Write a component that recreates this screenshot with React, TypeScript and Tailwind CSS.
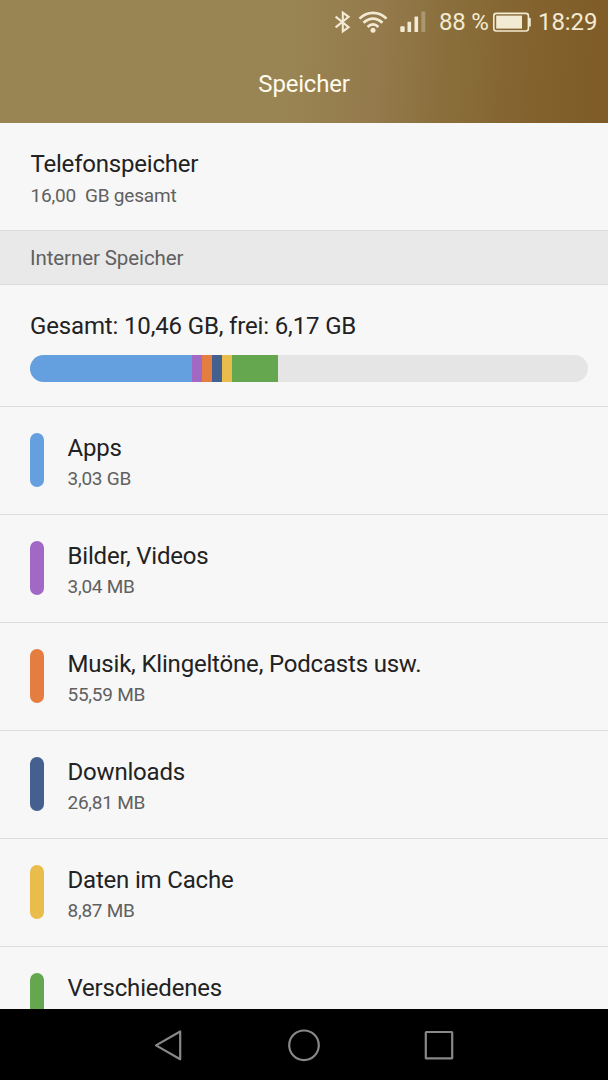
type Category = { name: string; size?: string; color: string };

const categories: Category[] = [
  { name: 'Apps', size: '3,03 GB', color: 'bg-[#64a0e0]' },
  { name: 'Bilder, Videos', size: '3,04 MB', color: 'bg-[#a168c4]' },
  { name: 'Musik, Klingeltöne, Podcasts usw.', size: '55,59 MB', color: 'bg-[#e57d40]' },
  { name: 'Downloads', size: '26,81 MB', color: 'bg-[#44608f]' },
  { name: 'Daten im Cache', size: '8,87 MB', color: 'bg-[#e9bc4b]' },
  { name: 'Verschiedenes', color: 'bg-[#65a74f]' },
];

const segments = [
  'w-[162px] bg-[#64a0e0]',
  'w-[10px] bg-[#a168c4]',
  'w-[10px] bg-[#e57d40]',
  'w-[10px] bg-[#44608f]',
  'w-[10px] bg-[#e9bc4b]',
  'w-[46px] bg-[#65a74f]',
];

function BluetoothIcon() {
  return (
    <svg className="h-[24px] w-[18px]" viewBox="0 0 18 24" fill="none" stroke="currentColor" strokeWidth="2.1">
      <path d="M1.6 6.6 14.6 17.2 8.8 21.4V2.6L14.6 6.8 1.6 17.4" />
    </svg>
  );
}

function WifiIcon() {
  return (
    <svg className="ml-[6px] h-[24px] w-[30px]" viewBox="0 0 30 24" fill="none" stroke="currentColor" strokeWidth="2.7">
      <path d="M1.5 8.6Q7.5 2.8 15 2.8T28.5 8.6M5.5 12.8Q10 8.6 15 8.6T24.5 12.8M9.6 17Q12.2 14.4 15 14.4T20.4 17" />
      <circle cx="15" cy="20.2" r="2.5" fill="currentColor" stroke="none" />
    </svg>
  );
}

function SignalIcon() {
  return (
    <svg className="ml-[12px] h-[24px] w-[27px]" viewBox="0 0 27 24" fill="currentColor">
      <rect x="0.3" y="16.3" width="4.4" height="5.7" rx="1" />
      <rect x="7.5" y="11.8" width="3.6" height="10.2" rx="0.6" />
      <rect x="14.5" y="6.6" width="3.6" height="15.4" rx="0.6" />
      <rect x="21.3" y="1.6" width="4" height="20.4" rx="0.6" opacity="0.3" />
    </svg>
  );
}

function BatteryIcon() {
  return (
    <svg className="ml-px h-[24px] w-[40px]" viewBox="0 0 40 24">
      <rect x="1.8" y="3.4" width="34.6" height="17.6" rx="2.5" fill="none" stroke="currentColor" strokeWidth="1.6" />
      <rect x="4.2" y="5.6" width="25.8" height="13" fill="currentColor" />
      <path d="M36.8 7.8h1q1 0 1 1.2v6.4q0 1.2-1 1.2h-1z" fill="currentColor" />
    </svg>
  );
}

export default function App() {
  return (
    <div className="flex h-[1080px] w-[608px] flex-col overflow-hidden bg-[#f7f7f7] font-['Roboto',sans-serif] text-[#222]">
      <header className="flex h-[123px] shrink-0 flex-col bg-[linear-gradient(94deg,#998453_0%,#998453_48%,#947a4c_62%,#8a6f3c_73%,#83622d_87%,#7f5c27_100%)]">
        <div className="flex h-[44px] items-center justify-end pr-[10px] text-[#f3ead3]">
          <BluetoothIcon />
          <WifiIcon />
          <SignalIcon />
          <span className="ml-[12px] w-[52px] whitespace-nowrap text-[24px] leading-[28px] tracking-[-0.2px]">88 %</span>
          <BatteryIcon />
          <span className="ml-[6px] w-[60px] whitespace-nowrap text-[24px] leading-[28px] tracking-[-0.1px]">18:29</span>
        </div>
        <h1 className="pt-[25px] text-center text-[24px] leading-[30px] tracking-[-0.2px] text-[#fffbed]">Speicher</h1>
      </header>

      <main className="min-h-0 flex-1 overflow-hidden">
        <section className="h-[107px] pl-[30.5px] pt-[26px]">
          <h2 className="text-[24px] leading-[30px] tracking-[-0.2px]">Telefonspeicher</h2>
          <p className="whitespace-pre pt-[4px] text-[19px] leading-[26px] tracking-[-0.2px] text-[#606060]">16,00  GB gesamt</p>
        </section>

        <div className="flex h-[55px] items-center border-y border-[#dcdcdc] bg-[#e9e9e9] pl-[30px] pt-[2px] text-[20.5px] tracking-[-0.1px] text-[#606060]">
          Interner Speicher
        </div>

        <section className="h-[121px] px-[30px] pt-[26px]">
          <p className="text-[24px] leading-[30px] tracking-[-0.15px]">Gesamt: 10,46 GB, frei: 6,17 GB</p>
          <div className="mt-[14px] flex h-[27px] w-[558px] overflow-hidden rounded-full bg-[#e5e5e5]">
            {segments.map((s) => (
              <div key={s} className={s} />
            ))}
          </div>
        </section>

        <ul>
          {categories.map((c) => (
            <li key={c.name} className="flex h-[108px] border-t border-[#dddddd] pl-[30px] pt-[26px]">
              <span className={`h-[54px] w-[14px] rounded-full ${c.color}`} />
              <div className="pl-[23.5px]">
                <p className="text-[24px] leading-[30px] tracking-[-0.19px]">{c.name}</p>
                {c.size && (
                  <p className="pt-[3px] text-[19px] leading-[26px] tracking-[-0.25px] text-[#606060]">{c.size}</p>
                )}
              </div>
            </li>
          ))}
        </ul>
      </main>

      <nav className="flex h-[71px] shrink-0 items-center justify-center gap-[99px] bg-black text-[#888888]">
        <svg className="h-[36px] w-[36px]" viewBox="0 0 36 36" fill="none" stroke="currentColor" strokeWidth="2.2" strokeLinejoin="round">
          <path d="M29.2 4.5V32.3L5 18.4Z" />
        </svg>
        <svg className="h-[36px] w-[36px]" viewBox="0 0 36 36" fill="none" stroke="currentColor" strokeWidth="2.2">
          <circle cx="18" cy="18.3" r="14.8" />
        </svg>
        <svg className="h-[36px] w-[36px]" viewBox="0 0 36 36" fill="none" stroke="currentColor" strokeWidth="2.2" strokeLinejoin="round">
          <rect x="4.8" y="5" width="26.4" height="26.4" rx="0.5" />
        </svg>
      </nav>
    </div>
  );
}
